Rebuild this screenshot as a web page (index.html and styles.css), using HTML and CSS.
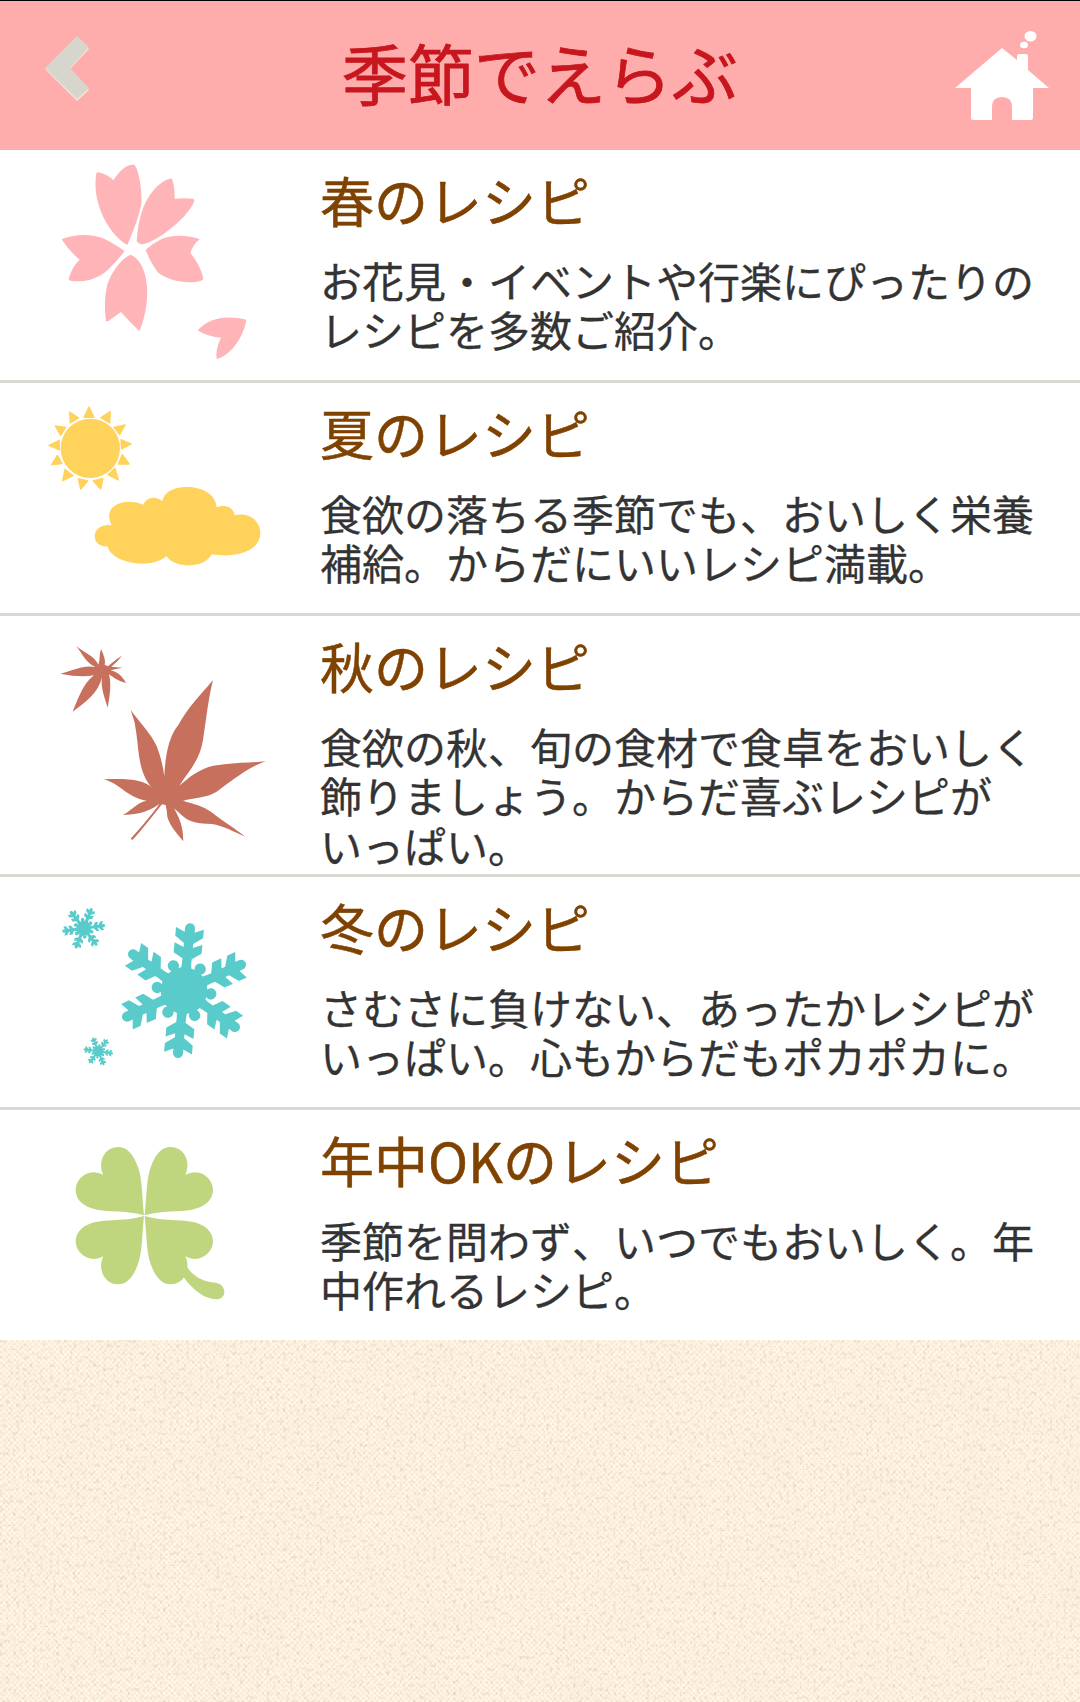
FILE: index.html
```html
<!DOCTYPE html>
<html lang="ja">
<head>
<meta charset="utf-8">
<title>季節でえらぶ</title>
<link rel="stylesheet" href="styles.css">
</head>
<body>
<header class="bar">
  <svg class="back" viewBox="0 0 44 67"><path d="M32 3 44 14 25 34 44 55 32 66 0 34Z" fill="#f2e6dc"/><path d="M32 1 44 12 25 33 44 53 32 64 0 33Z" fill="#d6d6cd"/></svg>
  <h1 class="title">季節でえらぶ</h1>
  <svg class="home" viewBox="0 0 94 89" fill="#fff"><path d="M0 57 47 17 62 29V25Q62 23 64 23H71Q73 23 73 25V39L94 57H78V87Q78 89 76 89H57V76Q57 66 47 66T37 76V89H18Q16 89 16 87V57Z"/><ellipse cx="69" cy="14" rx="4" ry="3.200"/><ellipse cx="75.500" cy="5.200" rx="6" ry="5.200"/></svg>
</header>
<main class="list">
  <a class="row">
    <svg class="icon" viewBox="0 0 810 690" fill="#ffb4b8">
      <path d="M292 285C240 256 186 165 198 74Q199 67 205 67Q233 73 250 91C268 62 288 44 308 44Q313 43 316 48C328 70 334 108 335 155C325 210 308 245 292 285Z"/>
      <path d="M320 273C325 210 337 160 371 120Q396 91 420 86Q425 84 427 89Q434 108 434 146Q460 144 488 146Q495 149 492 155C478 190 430 234 382 264Q350 283 334 283Q323 280 320 273Z"/>
      <path d="M284 303Q243 275 217 264C180 250 130 252 95 268Q115 301 149 329Q126 350 116 386Q116 390 122 392C160 399 205 388 236 357Q260 335 284 303Z"/>
      <path d="M347 299Q370 279 396 266C430 253 478 255 509 268Q489 283 481 309Q508 340 520 384Q520 390 513 392C470 404 415 391 385 368Q362 341 347 299Z"/>
      <path d="M302 314C275 325 243 366 231 408Q220 455 228 514H234L273 486Q302 519 328 544C347 500 358 436 348 388Q337 330 302 314Z"/>
      <path d="M503 541C539 502 590 495 649 509C643 551 609 614 560 627Q555 600 573 563Q530 560 503 541Z"/>
    </svg>
    <div class="copy"><h2>春のレシピ</h2><p>お花見・イベントや行楽にぴったりの<br>レシピを多数ご紹介。</p></div>
  </a>
  <a class="row">
    <svg class="icon" viewBox="0 -6 810 690" fill="#ffd25c">
      <circle cx="181" cy="190" r="89"/>
      <path stroke="#ffd25c" stroke-width="4" stroke-linejoin="round" d="M177 66 192 97H162ZM119 81 146 99 121 114ZM76 123 107 127 92 151ZM57 181 88 166V195ZM65 239 82 211 96 236ZM98 287 105 253 129 272ZM152 312 145 281 173 288ZM212 312 190 288 219 280ZM265 285 234 269 255 250ZM297 237 265 237 277 209ZM304 177 275 192 273 164ZM285 120 269 149 252 127ZM241 80 239 114 213 98Z"/>
      <path d="M245 421C220 371 262 349 300 350Q322 350 340 359C350 334 380 332 397 349C404 315 441 306 470 306C520 306 557 329 560 367C589 355 612 370 614 391C656 381 691 406 691 445C691 487 642 522 545 508C530 537 494 543 465 541Q426 537 409 514C384 536 337 541 299 532C262 523 236 505 233 484C207 486 194 470 194 452C195 432 217 417 245 421Z"/>
    </svg>
    <div class="copy"><h2>夏のレシピ</h2><p>食欲の落ちる季節でも、おいしく栄養<br>補給。からだにいいレシピ満載。</p></div>
  </a>
  <a class="row">
    <svg class="icon" viewBox="0 -27 810 690" fill="#c7705d">
      <path d="M549 165C535 220 530 275 519 345C510 405 475 440 448 482C475 458 510 430 550 422C605 413 660 413 708 409C658 423 602 470 560 500C530 519 490 518 459 527C490 537 520 542 545 562C580 590 620 614 646 635C610 620 580 602 545 597C505 595 480 593 458 573L432 550C448 580 459 600 460 649C440 625 408 590 411 562L407 540L396 538C370 570 335 617 307 645L302 641C335 605 370 563 388 537C345 569 305 568 278 570C307 555 318 534 350 527C290 518 270 475 220 463C280 460 345 460 368 491C325 445 327 380 319 325Q316 290 302 255C335 300 376 340 386 380Q398 415 403 454C405 400 415 335 445 300C475 245 510 212 549 165Z"/>
      <path d="M138 62C161 84 191 88 205 119C211 103 207 88 213 72C219 85 228 105 224 119L234 124Q257 103 276 92Q265 108 244 125L277 128 242 136C263 140 278 155 288 174C263 168 250 157 237 148C245 180 239 214 233 248C225 220 211 190 216 157C206 203 164 235 128 260C143 225 158 176 192 151Q150 158 91 146C136 135 158 119 196 126C164 110 157 85 138 62Z"/>
    </svg>
    <div class="copy"><h2>秋のレシピ</h2><p>食欲の秋、旬の食材で食卓をおいしく<br>飾りましょう。からだ喜ぶレシピが<br>いっぱい。</p></div>
  </a>
  <a class="row">
    <svg class="icon" viewBox="0 -24 810 690" fill="#59cbcb">
      <defs>
        <g id="arm">
          <path d="M-22 0-14-80V-96L-42-112V-142L-14-130V-142L-42-162V-188L-15-176V-188A15 15 0 0 1 15-188V-176L42-188V-162L14-142V-130L42-142V-115L14-96V-80L22 0Z"/>
          <circle cx="42" cy="-69" r="17"/>
        </g>
        <g id="flake">
          <circle r="70"/>
          <use href="#arm"/><use href="#arm" transform="rotate(60)"/><use href="#arm" transform="rotate(120)"/><use href="#arm" transform="rotate(180)"/><use href="#arm" transform="rotate(240)"/><use href="#arm" transform="rotate(300)"/>
        </g>
      </defs>
      <use href="#flake" transform="translate(462 317) rotate(5.500)"/>
      <use href="#flake" transform="translate(161 130) rotate(22) scale(.32)"/>
      <use href="#flake" transform="translate(205 499) rotate(-22) scale(.22)"/>
    </svg>
    <div class="copy"><h2>冬のレシピ</h2><p>さむさに負けない、あったかレシピが<br>いっぱい。心もからだもポカポカに。</p></div>
  </a>
  <a class="row">
    <svg class="icon" viewBox="0 -30 810 690" fill="#bfd67f">
      <defs><path id="leaf" d="M-1-1C-8-70-6-110-20-148C-34-185-52-206-79-206C-118-206-142-162-123-122C-167-146-206-111-206-77C-206-47-181-25-142-18C-105-11-50-16-1-1Z"/></defs>
      <use href="#leaf" transform="translate(343 287)"/>
      <use href="#leaf" transform="translate(343 287) scale(-1 1)"/>
      <use href="#leaf" transform="translate(343 287) scale(1 -1)"/>
      <use href="#leaf" transform="translate(343 287) scale(-1 -1)"/>
      <path d="M470 440C493 472 520 485 556 488C574 490 583 503 583 516C583 530 573 538 558 538C525 536 490 512 460 470Z"/>
    </svg>
    <div class="copy"><h2>年中OKのレシピ</h2><p>季節を問わず、いつでもおいしく。年<br>中作れるレシピ。</p></div>
  </a>
</main>
<svg class="linen" preserveAspectRatio="none">
  <defs>
    <pattern id="weave" width="5.330" height="5.330" patternUnits="userSpaceOnUse">
      <circle cx="1.330" cy="1.330" r="1.200" fill="#f8e5d2"/><circle cx="4" cy="4" r="1.200" fill="#f8e5d2"/>
    </pattern>
    <filter id="grain" x="0" y="0" width="100%" height="100%" color-interpolation-filters="sRGB">
      <feTurbulence type="fractalNoise" baseFrequency=".3 .25" numOctaves="2" seed="8"/>
      <feColorMatrix values="0 0 0 0 .78  0 0 0 0 .7  0 0 0 0 .66  1.100 0 0 0 -.56"/>
    </filter>
    <filter id="tone" x="0" y="0" width="100%" height="100%" color-interpolation-filters="sRGB">
      <feTurbulence type="fractalNoise" baseFrequency=".02 .03" numOctaves="2" seed="3"/>
      <feColorMatrix values="0 0 0 0 .97  0 0 0 0 .87  0 0 0 0 .77  .25 0 0 0 -.08"/>
    </filter>
  </defs>
  <rect width="100%" height="100%" fill="#fff8e5"/>
  <rect width="100%" height="100%" filter="url(#tone)"/>
  <rect width="100%" height="100%" fill="url(#weave)"/>
  <rect width="100%" height="100%" filter="url(#grain)"/>
</svg>
</body>
</html>
```
FILE: styles.css
```css
* { box-sizing: border-box; }
body {
  margin: 0;
  height: 1702px;
  display: flex;
  flex-direction: column;
  background: #fff5e3;
  font-family: "Noto Sans CJK JP", sans-serif;
  font-kerning: none;
  overflow: hidden;
}
h1, h2, p { margin: 0; font-weight: 400; white-space: nowrap; }
.bar {
  height: 150px;
  flex: none;
  display: grid;
  grid-template-columns: 150px 1fr 150px;
  border-top: 1px solid #000;
  background: #ffacac;
}
.back { width: 44px; height: 67px; margin: 34px 0 0 45px; }
.home { width: 94px; height: 89px; margin: 30px 0 0 25px; }
.title {
  text-align: center;
  font-size: 66px;
  line-height: 96px;
  padding-top: 22px;
  color: #c7161e;
  -webkit-text-stroke: .8px #c7161e;
}
.list { flex: none; background: #fff; }
.row {
  display: flex;
  align-items: flex-start;
  min-height: 233px;
  padding-left: 30px;
  border-bottom: 3px solid #d8d9d2;
}
.row:last-child { border-bottom: 0; min-height: 230px; }
.icon { width: 270px; height: 230px; flex: none; }
.copy { padding: 10px 0 5px 20px; }
.copy h2 {
  font-size: 54px;
  line-height: 80px;
  color: #7f4200;
  -webkit-text-stroke: .5px #7f4200;
  margin-bottom: 15px;
}
.copy p {
  font-size: 42px;
  line-height: 49.300px;
  color: #333;
  -webkit-text-stroke: .3px #333;
}
.linen { flex: 1; width: 100%; min-height: 0; display: block; }
```
